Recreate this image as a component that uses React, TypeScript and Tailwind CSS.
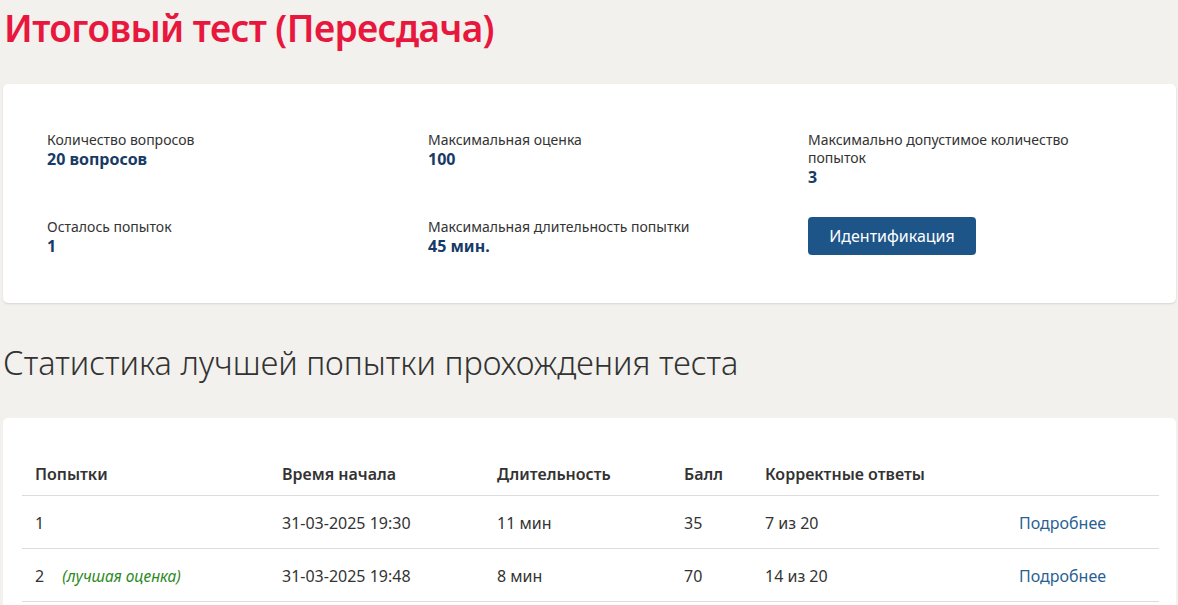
export default function App() {
  const rows = [
    { n: "1", best: false, start: "31-03-2025 19:30", dur: "11 мин", score: "35", correct: "7 из 20" },
    { n: "2", best: true, start: "31-03-2025 19:48", dur: "8 мин", score: "70", correct: "14 из 20" },
  ];

  return (
    <div className="min-h-screen bg-[#f2f1ee] text-[#333]" style={{ fontFamily: '"Noto Sans", "Open Sans", sans-serif' }}>
      <h1 className="pl-[4px] pt-[2px] text-[37px] leading-[52px] font-semibold tracking-[-0.6px] text-[#e8173d]">
        Итоговый тест (Пересдача)
      </h1>

      {/* Info card */}
      <div className="mt-[30px] ml-[3px] mr-[2px] rounded-[5px] bg-white shadow-[0_1px_2px_rgba(0,0,0,0.12)] pl-[44px] pt-[47px] pb-[47px]">
        <div className="grid grid-cols-[381px_380px_320px] gap-y-[30px] text-[14px] leading-[18px]">
          <div>
            <div>Количество вопросов</div>
            <div className="text-[16px] leading-[20px] font-bold text-[#173b66]">20 вопросов</div>
          </div>
          <div>
            <div>Максимальная оценка</div>
            <div className="text-[16px] leading-[20px] font-bold text-[#173b66]">100</div>
          </div>
          <div>
            <div>Максимально допустимое количество попыток</div>
            <div className="text-[16px] leading-[20px] font-bold text-[#173b66]">3</div>
          </div>
          <div>
            <div className="pt-[1px]">Осталось попыток</div>
            <div className="text-[16px] leading-[20px] font-bold text-[#173b66]">1</div>
          </div>
          <div>
            <div className="pt-[1px]">Максимальная длительность попытки</div>
            <div className="text-[16px] leading-[20px] font-bold text-[#173b66]">45 мин.</div>
          </div>
          <div>
            <button className="h-[38px] w-[168px] rounded-[4px] bg-[#1d5589] text-[16px] text-white">
              Идентификация
            </button>
          </div>
        </div>
      </div>

      <h2 className="pl-[3px] mt-[38px] text-[32.5px] leading-[44px] font-light text-[#333]">
        Статистика лучшей попытки прохождения теста
      </h2>

      {/* Stats card */}
      <div className="mt-[33px] ml-[3px] mr-[2px] rounded-[5px] bg-white pl-[19px] pr-[17px] pt-[35px] pb-[10px]">
        <table className="w-full table-fixed border-collapse text-[16px]">
          <thead>
            <tr className="border-b border-[#dddddd]">
              <th className="w-[260px] h-[42px] pl-[13px] text-left font-semibold">Попытки</th>
              <th className="w-[215px] text-left font-semibold">Время начала</th>
              <th className="w-[187px] text-left font-semibold">Длительность</th>
              <th className="w-[81px] text-left font-semibold">Балл</th>
              <th className="w-[254px] text-left font-semibold">Корректные ответы</th>
              <th />
            </tr>
          </thead>
          <tbody>
            {rows.map((r) => (
              <tr key={r.n} className="border-b border-[#dddddd]">
                <td className="h-[53px] pl-[13px] pt-[3px]">
                  {r.n}
                  {r.best && <span className="ml-[18px] italic text-[15.5px] text-[#2e8a1f]">(лучшая оценка)</span>}
                </td>
                <td className="pt-[3px]">{r.start}</td>
                <td className="pt-[3px]">{r.dur}</td>
                <td className="pt-[3px]">{r.score}</td>
                <td className="pt-[3px]">{r.correct}</td>
                <td className="pt-[3px] text-[#2a5f94]">Подробнее</td>
              </tr>
            ))}
          </tbody>
        </table>
      </div>
    </div>
  );
}
